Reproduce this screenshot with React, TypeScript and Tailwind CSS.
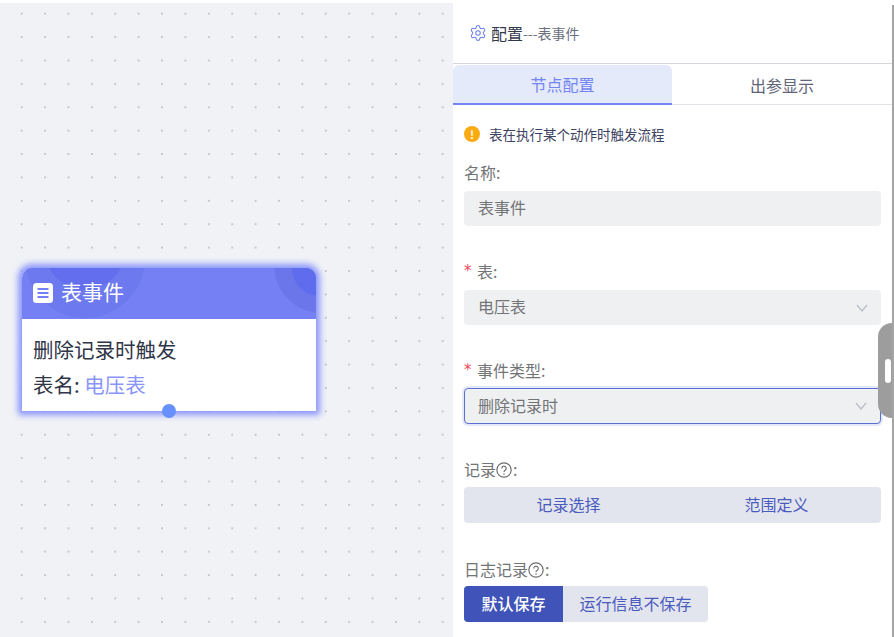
import React from "react";
import { Settings } from "lucide-react";

const font = { fontFamily: '"Noto Sans CJK SC", "Noto Sans", sans-serif' };

function Chevron() {
  return (
    <svg width="12" height="8" viewBox="0 0 12 8" fill="none" stroke="#b8bcc4" strokeWidth="1.2" className="shrink-0">
      <path d="M1 1l5 6 5-6" />
    </svg>
  );
}

function Help() {
  return (
    <svg width="16" height="16" viewBox="0 0 15 15" fill="none" stroke="#6b6b6b" strokeWidth="1.1" className="mt-[2px] mr-[1px]">
      <circle cx="7.5" cy="7.5" r="6.7" />
      <path d="M5.4 6a2.1 2.1 0 1 1 3.2 1.8c-.7.4-1.1.8-1.1 1.6" />
      <circle cx="7.5" cy="11.2" r=".7" fill="#6b6b6b" stroke="none" />
    </svg>
  );
}

function Label({ children, required }: { children: React.ReactNode; required?: boolean }) {
  return (
    <div className="flex h-[22px] items-center pb-[1px] text-[16px] leading-[22px] text-[#737476]">
      {required && (
        <span className="mr-[5px] w-[8px] font-['DejaVu_Sans'] text-[15px] text-[#f5475b]">*</span>
      )}
      {children}
    </div>
  );
}

function Field({ value, chevron, focused }: { value: string; chevron?: boolean; focused?: boolean }) {
  return (
    <div
      className={
        "flex items-center justify-between rounded-[4px] bg-[#eff0f2] pr-[13px] text-[16px] text-[#737476] " +
        (focused ? "h-[36px] border border-[#5a70d0] pl-[13px] shadow-[0_0_0_2px_#e4e8f8]" : "h-[35px] pl-[14px]")
      }
    >
      <span className="pb-[3px]">{value}</span>
      {chevron && <Chevron />}
    </div>
  );
}

export default function App() {
  return (
    <div className="flex h-[637px] w-[894px] overflow-hidden bg-white" style={font}>
      {/* canvas */}
      <div className="relative mt-[3px] h-[634px] w-[453px] shrink-0 bg-[#f0f2f6] bg-[radial-gradient(circle,#c6c8ce_0.8px,transparent_1px)] bg-[size:23.4px_23.4px] bg-[position:10px_-1px]">
        <div className="absolute left-[22px] top-[265px] w-[294px] rounded-t-[10px] bg-white shadow-[0_0_6px_4px_#8b96fb]">
          <div className="relative flex h-[51px] items-center overflow-hidden rounded-t-[10px] bg-[#7480f4] pb-[3px] pl-[11px] text-white">
            <div className="absolute left-[3px] top-[-70px] h-[120px] w-[120px] rounded-full bg-[#6d79ee]" />
            <div className="absolute left-[23px] top-[-58px] h-[80px] w-[80px] rounded-full bg-[#626eee]" />
            <div className="absolute left-[252px] top-[-51px] h-[96px] w-[96px] rounded-full bg-[#6a76ea]" />
            <div className="absolute left-[270px] top-[-28px] h-[56px] w-[56px] rounded-full bg-[#5f6cee]" />
            <svg width="20" height="20" viewBox="0 0 20 20" className="relative mr-[8px] mt-[1px]">
              <rect width="20" height="20" rx="3.5" fill="#fff" />
              <path d="M4.5 6h11M4.5 10h11M4.5 14h11" stroke="#7480f4" strokeWidth="1.8" />
            </svg>
            <span className="relative pb-[1px] text-[21px] leading-none">表事件</span>
          </div>
          <div className="relative h-[92px] px-[11px] pt-[13px] text-[20.5px] leading-[35px] text-[#303548]">
            <div>删除记录时触发</div>
            <div>
              表名: <span className="text-[#8a95fb]">电压表</span>
            </div>
            <div className="absolute bottom-[-7px] left-[140px] h-[14px] w-[14px] rounded-full bg-[#6690fb]" />
          </div>
        </div>
      </div>

      {/* panel */}
      <div className="relative w-[439px] shrink-0">
        <div className="box-content flex h-[60px] items-center border-b border-[#d6d7de] pl-[16px] pt-[3px]">
          <Settings size={18} strokeWidth={1.4} color="#6e80ee" className="mr-[4px]" />
          <span className="text-[16px] text-[#333a4d]">配置</span>
          <span className="text-[14px] text-[#6b7080]">---表事件</span>
        </div>
        <div className="mt-[1px] flex h-[40px] border-b border-[#e1e2e8]">
          <div className="flex h-[40px] w-[219px] items-center justify-center rounded-t-[6px] border-b-[2px] border-[#7385f2] bg-[#e5eafb] text-[16px] text-[#7385f2]">
            节点配置
          </div>
          <div className="flex flex-1 items-center justify-center text-[16px] text-[#5f6478]">出参显示</div>
        </div>

        <div className="px-[11px]">
          <div className="mt-[18px] flex h-[22px] items-center text-[13.5px] text-[#3d4260]">
            <span className="mr-[9px] flex h-[16px] w-[16px] items-center justify-center rounded-full bg-[#fbab12] text-[11px] font-bold text-white">!</span>
            表在执行某个动作时触发流程
          </div>

          <div className="mt-[16px]"><Label>名称:</Label></div>
          <div className="mt-[8px]"><Field value="表事件" /></div>

          <div className="mt-[34px]"><Label required>表:</Label></div>
          <div className="mt-[8px]"><Field value="电压表" chevron /></div>

          <div className="mt-[34px]"><Label required>事件类型:</Label></div>
          <div className="mt-[7px]"><Field value="删除记录时" chevron focused /></div>

          <div className="mt-[34px]">
            <Label>记录<Help />:</Label>
          </div>
          <div className="mt-[7px] flex h-[36px] items-center rounded-[4px] bg-[#e2e5ed] pb-[2px] text-[16px] text-[#4a5bc0]">
            <div className="flex w-[209px] justify-center">记录选择</div>
            <div className="flex w-[207px] justify-center">范围定义</div>
          </div>

          <div className="mt-[35px]">
            <Label>日志记录<Help />:</Label>
          </div>
          <div className="mt-[6px] flex h-[36px] w-[244px] overflow-hidden rounded-[4px] bg-[#e2e5ed] text-[16px]">
            <div className="flex w-[99px] items-center justify-center bg-[#3f53b8] pb-[2px] font-medium text-white">默认保存</div>
            <div className="flex flex-1 items-center justify-center pb-[2px] text-[#4a5bc0]">运行信息不保存</div>
          </div>
        </div>

        {/* drag handle */}
        <div className="absolute right-[0px] top-[323px] flex h-[95px] w-[14px] items-center justify-center rounded-l-[20px] bg-[#9d9d9d] pl-[5px]">
          <div className="h-[24px] w-[6px] rounded-[3px] bg-white" />
        </div>
      </div>
      <div className="mt-[5px] h-full w-[2px] bg-[#a5a5a5]" />
    </div>
  );
}
